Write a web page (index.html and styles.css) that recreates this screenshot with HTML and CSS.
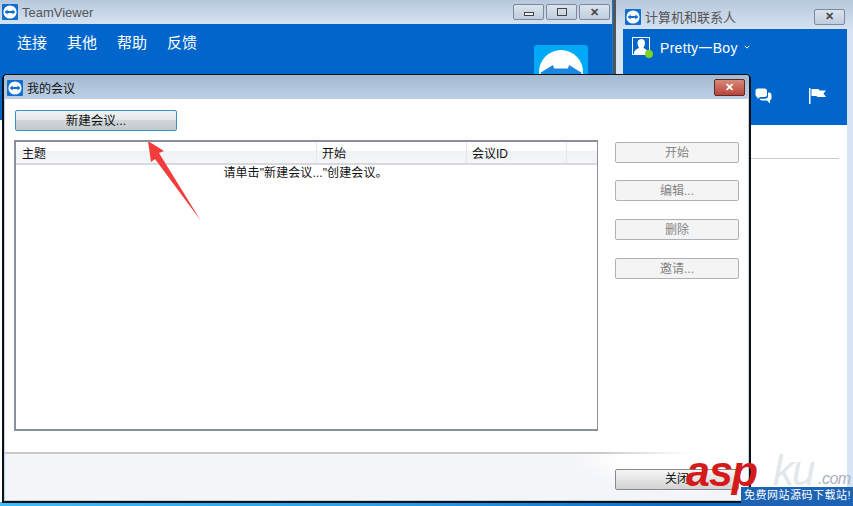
FILE: index.html
```html
<!DOCTYPE html>
<html lang="zh-CN">
<head>
	<meta charset="UTF-8">
	<title>我的会议</title>
	<link rel="stylesheet" href="styles.css">
</head>
<body>
	<svg class="defs" width="0" height="0">
		<symbol id="tvLogo" viewBox="0 0 16 16">
			<rect width="16" height="16" rx="1" fill="#0e6fd0"/>
			<circle cx="8" cy="8" r="6.6" fill="#fff"/>
			<path d="M2.600 8 5.600 5.600V7h4.800V5.600L13.400 8 10.400 10.400V9H5.600v1.400z" fill="#0e6fd0"/>
		</symbol>
	</svg>

	<div class="desktop">
		<div class="window mainWindow">
			<div class="titleBar">
				<svg class="titleIcon"><use href="#tvLogo"/></svg>
				<span class="titleText">TeamViewer</span>
				<div class="winButtons">
					<div class="winButton"><span class="glyphMin"></span></div>
					<div class="winButton"><span class="glyphMax"></span></div>
					<div class="winButton glyphClose">✕</div>
				</div>
			</div>
			<div class="mainBlue">
				<div class="menu">
					<span>连接</span>
					<span>其他</span>
					<span>帮助</span>
					<span>反馈</span>
				</div>
				<svg class="bigLogo" viewBox="0 0 54 54">
					<rect width="54" height="54" rx="3" fill="#00a9f5"/>
					<circle cx="27" cy="27" r="22" fill="#fff"/>
					<path d="M6 28 19 20 20 23.500H34L35 20 48 28 35 36 34 32.500H20L19 36z" fill="#1a86e0"/>
				</svg>
			</div>
			<div class="mainRest"></div>
		</div>

		<div class="window contactsWindow">
			<div class="titleBar contactsTitle">
				<svg class="titleIcon"><use href="#tvLogo"/></svg>
				<span class="titleText">计算机和联系人</span>
				<div class="winButtons">
					<div class="winButton glyphClose">✕</div>
				</div>
			</div>
			<div class="contactsBody">
				<div class="contactsBlue">
					<div class="userRow">
						<div class="avatar">
							<svg viewBox="0 0 18 18" width="18" height="18">
								<rect x="0.500" y="0.500" width="17" height="17" fill="#0066cc" stroke="#fff"/>
								<path d="M2 17C2 12.500 5 12 7 11 6 9 5.500 7.500 5.500 6 5.500 3 7.500 2 9.500 2S13 3.500 13 6C13 8 12 9.500 11.500 11 13.500 12 16 13 16 17z" fill="#fff"/>
							</svg>
							<span class="statusDot"></span>
						</div>
						<span class="userName">Pretty一Boy</span>
						<svg class="chevron" viewBox="0 0 8 5" width="6" height="4">
							<path d="M1 1 4 4 7 1" fill="none" stroke="#fff" stroke-width="1.300"/>
						</svg>
					</div>
					<div class="toolRow">
						<svg viewBox="0 0 17 16" width="17" height="16">
							<path d="M3 0.500H9.500Q12 0.500 12 3V6.500Q12 9 9.500 9H5L2.500 11V9Q0.500 9 0.500 6.500V3Q0.500 0.500 3 0.500z" fill="#fff"/>
							<path d="M13 4.500H14.500Q16.500 4.500 16.500 7V10Q16.500 12 15 12.300V15.500L12 12.500H7Q5 12.500 4.500 10.800H10Q13 10.800 13 8z" fill="#fff"/>
						</svg>
						<svg viewBox="0 0 17 16" width="17" height="16">
							<path d="M0 0H1.500V16H0z M2.500 1H9.500L10.500 2.500H17L14.500 5.500 17 9H8.500L7.500 8H2.500z" fill="#fff"/>
						</svg>
					</div>
				</div>
				<div class="contactsLine"></div>
			</div>
		</div>

		<div class="window dialog">
			<div class="titleBar dialogTitle">
				<svg class="titleIcon"><use href="#tvLogo"/></svg>
				<span class="dialogText">我的会议</span>
				<div class="closeRed">✕</div>
			</div>
			<div class="dialogBody">
				<div class="newRow">
					<div class="newButton">新建会议...</div>
				</div>
				<div class="listRow">
					<div class="listTable">
						<div class="listHead">
							<div class="col colTopic">主题</div>
							<div class="col colStart">开始</div>
							<div class="col colId">会议ID</div>
							<div class="col colEnd"></div>
						</div>
						<div class="listEmpty">请单击"新建会议..."创建会议。</div>
					</div>
					<div class="sideButtons">
						<div class="sideButton">开始</div>
						<div class="sideButton">编辑...</div>
						<div class="sideButton">删除</div>
						<div class="sideButton">邀请...</div>
					</div>
				</div>
			</div>
			<div class="dialogFoot">
				<div class="footButton">关闭</div>
			</div>
		</div>

		<svg class="arrow" width="853" height="506" viewBox="0 0 853 506">
			<path d="M148 141 164 151 159 153 201 221 155 159 151 162z" fill="#f43c3c"/>
		</svg>

		<div class="watermark">
			<div class="wmBand">免费网站源码下载站!</div>
			<span class="wmKu">ku</span>
			<span class="wmCom">.com</span>
			<span class="wmAsp">asp</span>
		</div>
	</div>
</body>
</html>
```

FILE: styles.css
```css
*{
	margin: 0;
	padding: 0;
	box-sizing: border-box;
}
body{
	font-family: "Liberation Sans", "Noto Sans CJK SC", sans-serif;
	font-size: 12px;
	overflow: hidden;
}
.defs{
	display: block;
	height: 0;
}
.desktop{
	position: relative;
	width: 853px;
	height: 506px;
	overflow: hidden;
	background: linear-gradient(90deg, #3dbdf6 0%, #2a9fe8 45%, #0a6cc8 80%);
}
.window{
	position: absolute;
	display: flex;
	flex-direction: column;
}
.titleBar{
	display: flex;
	align-items: center;
	flex: none;
	background: linear-gradient(#b7c8dc, #d5e2f1);
}
.titleIcon{
	flex: none;
	width: 16px;
	height: 16px;
}
.titleText{
	margin-left: 4px;
	color: #555;
	font-size: 13px;
}
.winButtons{
	display: flex;
	gap: 2px;
	margin-left: auto;
}
.winButton{
	display: flex;
	align-items: center;
	justify-content: center;
	width: 31px;
	height: 16px;
	border: 1px solid #7d8a9c;
	border-radius: 2px;
	background: linear-gradient(#dbe4ee, #bfcddd);
}
.glyphClose{
	color: #444;
	font-size: 11px;
	font-weight: bold;
}
.glyphMin{
	display: block;
	width: 10px;
	height: 4px;
	margin-top: 3px;
	border: 1px solid #444;
	background: #eee;
}
.glyphMax{
	display: block;
	width: 10px;
	height: 8px;
	border: 1px solid #444;
}

/* TeamViewer main window */
.mainWindow{
	left: 0;
	top: 0;
	width: 612px;
	height: 502px;
}
.mainWindow .titleBar{
	height: 24px;
	padding: 0 2px;
}
.mainBlue{
	display: flex;
	flex: none;
	justify-content: space-between;
	height: 96px;
	padding: 9px 24px 0 17px;
	background: #0066cc;
}
.menu{
	display: flex;
	gap: 20px;
	color: #fff;
	font-size: 15px;
	line-height: 20px;
}
.bigLogo{
	width: 54px;
	height: 54px;
	margin-top: 12px;
}
.mainRest{
	flex: 1;
	background: #fff;
}

/* contacts window */
.contactsWindow{
	left: 613px;
	top: 0;
	width: 240px;
	height: 502px;
	border-left: 3px solid #555;
	background: #d6e4f3;
}
.contactsTitle{
	height: 29px;
	padding: 4px 8px 0 9px;
}
.contactsBody{
	flex: 1;
	margin: 0 6px 0 7px;
	background: #fff;
}
.contactsBlue{
	height: 96px;
	padding: 8px 0 0 9px;
	background: #0066cc;
}
.userRow{
	display: flex;
	align-items: center;
	height: 20px;
	color: #fff;
}
.avatar{
	position: relative;
	width: 18px;
	height: 18px;
	margin-top: -2px;
}
.avatar svg{
	display: block;
}
.statusDot{
	position: absolute;
	right: -3px;
	bottom: -3px;
	width: 8px;
	height: 8px;
	border-radius: 50%;
	background: #7ed321;
}
.userName{
	margin-left: 10px;
	font-size: 14px;
	letter-spacing: 0.3px;
}
.chevron{
	margin-left: 6px;
}
.toolRow{
	display: flex;
	justify-content: flex-end;
	gap: 37px;
	margin-top: 31px;
	padding-right: 21px;
}
.contactsLine{
	height: 1px;
	margin: 33px 8px 0 0;
	background: #ccc;
}

/* my meetings dialog */
.dialog{
	left: 2px;
	top: 74px;
	width: 749px;
	height: 429px;
	border: solid #111;
	border-width: 1px 2px 2px;
	border-radius: 5px 5px 0 0;
	background: #b8d4ee;
	padding: 0 1px 1px;
}
.dialogTitle{
	height: 24px;
	margin: 0 -1px;
	padding: 1px 4px 0 3px;
	background: linear-gradient(#a3bad3, #bccfe4);
	border-radius: 3px 3px 0 0;
}
.dialogText{
	margin-left: 4px;
	color: #111;
	font-size: 12px;
}
.closeRed{
	display: flex;
	align-items: center;
	justify-content: center;
	width: 31px;
	height: 17px;
	margin-left: auto;
	border: 1px solid #5a2a2a;
	border-radius: 2px;
	background: linear-gradient(#d98a78, #b8443a);
	color: #fff;
	font-size: 11px;
	font-weight: bold;
}
.dialogBody{
	flex: 1;
	padding: 11px 9px 0 10px;
	background: #fff;
}
.newRow{
	height: 30px;
}
.newButton{
	width: 162px;
	height: 21px;
	border: 1px solid #3a8fc4;
	border-radius: 2px;
	background: linear-gradient(#f0f2f3 0%, #e4e7e9 45%, #cfd5d8 50%, #c4cbcf 100%);
	color: #111;
	font-size: 12.500px;
	line-height: 20px;
	text-align: center;
}
.listRow{
	display: flex;
	gap: 17px;
	margin-left: -1px;
}
.listTable{
	flex: none;
	width: 584px;
	height: 291px;
	border: 2px solid #8a8f9c;
	border-right-width: 1px;
	background: #fff;
}
.listHead{
	display: flex;
	height: 23px;
	border-bottom: 2px solid #d8d9dc;
	background: linear-gradient(#fff 40%, #f1f2f4 45%, #f4f5f6);
	color: #111;
	line-height: 25px;
}
.col{
	flex: none;
	padding-left: 5px;
	border-right: 1px solid #e4e6e9;
}
.colTopic{
	width: 301px;
	padding-left: 6px;
}
.colStart{
	width: 150px;
}
.colId{
	width: 100px;
}
.colEnd{
	flex: 1;
	border-right: 0;
}
.listEmpty{
	padding-right: 2px;
	color: #111;
	letter-spacing: 0.1px;
	line-height: 16px;
	text-align: center;
}
.sideButtons{
	display: flex;
	flex: none;
	flex-direction: column;
	gap: 18px;
	margin-top: 2px;
}
.sideButton{
	width: 124px;
	height: 21px;
	border: 1px solid #adb2b6;
	border-radius: 2px;
	background: #f4f4f4;
	color: #858585;
	line-height: 21px;
	text-align: center;
}
.sideButton:first-child{
	margin-bottom: -1px;
}
.dialogFoot{
	display: flex;
	justify-content: flex-end;
	flex: none;
	height: 48px;
	padding: 15px 9px 0 0;
	border-top: 2px solid #c9c9cc;
	border-image: linear-gradient(90deg, #c9c9cc 80%, #fff 92%) 1;
	background: radial-gradient(ellipse 120px 40px at 92% 0, #fff 55%, #f4f5f7 100%);
}
.footButton{
	width: 124px;
	height: 21px;
	border: 1px solid #8a8a8a;
	border-radius: 2px;
	background: linear-gradient(#f6f6f6, #d2d2d2);
	color: #111;
	line-height: 19px;
	text-align: center;
}

/* annotation arrow */
.arrow{
	position: absolute;
	left: 0;
	top: 0;
}

/* site watermark */
.watermark{
	position: absolute;
	right: 0;
	bottom: 0;
	width: 170px;
	height: 60px;
}
.wmBand{
	position: absolute;
	right: 0;
	bottom: 0;
	width: 112px;
	height: 19px;
	padding: 1px 0 0 3px;
	background: #1d62b3;
	color: #fff;
	font-size: 11px;
	letter-spacing: 0.500px;
	line-height: 15px;
	white-space: nowrap;
}
.wmAsp{
	position: absolute;
	left: 3px;
	top: 2px;
	color: #d41a1a;
	font-family: "Liberation Sans", sans-serif;
	font-size: 43px;
	font-style: italic;
	font-weight: bold;
	letter-spacing: -1px;
	line-height: 46px;
}
.wmKu{
	position: absolute;
	left: 90px;
	top: 8px;
	color: #e3e6ea;
	font-family: "Liberation Sans", sans-serif;
	font-size: 42px;
	font-style: italic;
	letter-spacing: -2px;
	line-height: 34px;
}
.wmCom{
	position: absolute;
	left: 135px;
	top: 24px;
	color: #a9b1bd;
	font-family: "Liberation Sans", sans-serif;
	font-size: 16px;
	font-style: italic;
	letter-spacing: -0.5px;
	line-height: 18px;
}
```
